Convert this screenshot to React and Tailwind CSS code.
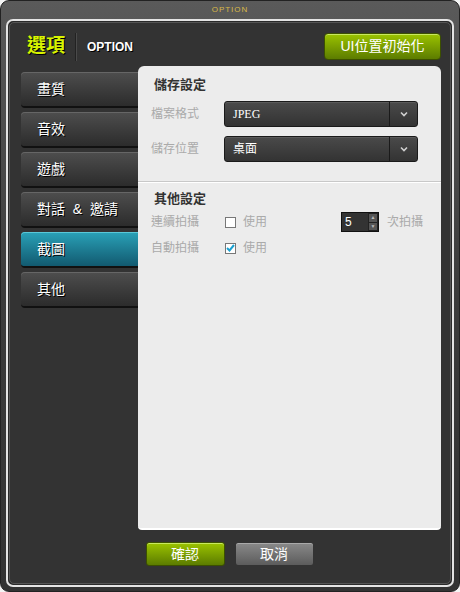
import React, { useState } from 'react';

const font = { fontFamily: '"Liberation Sans", "Noto Sans CJK TC", sans-serif' };

const navItems = ['畫質', '音效', '遊戲', '對話 & 邀請', '截圖', '其他'];

const Chevron = () => (
  <svg width="8" height="6" viewBox="0 0 8 6" className="text-[#d0d0d0]">
    <path d="M1 1.5 L4 4.5 L7 1.5" fill="none" stroke="currentColor" strokeWidth="1.6" />
  </svg>
);

const Select = ({ value }) => (
  <div className="flex h-[26px] w-[194px] rounded-[3px] border border-[#1a1a1a] bg-gradient-to-b from-[#4a4a4a] to-[#333] shadow-[inset_0_1px_0_#5a5a5a]">
    <div className="flex flex-1 items-center pl-[8px] text-[12px] text-white">{value}</div>
    <div className="flex w-[28px] items-center justify-center border-l border-[#1a1a1a]">
      <Chevron />
    </div>
  </div>
);

const Check = ({ checked }) => (
  <div className="flex h-[11px] w-[11px] items-center justify-center border border-[#777] bg-white">
    {checked && (
      <svg width="9" height="8" viewBox="0 0 9 8">
        <path d="M1 4 L3.5 6.5 L8 1" fill="none" stroke="#1aa0d0" strokeWidth="2" />
      </svg>
    )}
  </div>
);

export default function App() {
  const [active, setActive] = useState(4);

  return (
    <div style={font} className="h-[592px] w-[460px] bg-[#f4f4f4] p-0">
      <div className="flex h-full w-full flex-col rounded-[9px] border border-[#222] bg-gradient-to-b from-[#5a5a5a] via-[#3c3c3c] to-[#333]">
        <div className="flex h-[18px] items-center justify-center text-[8px] leading-none tracking-[1px] text-[#d8b848]">
          OPTION
        </div>
        <div className="mx-[5px] mb-[4px] flex flex-1 flex-col rounded-[7px] border-2 border-[#e4e4e4] bg-[#2a2a2a] p-[1px]">
          <div className="flex flex-1 flex-col rounded-[5px] border border-[#555] bg-[#333333]">
            <div className="flex h-[43px] items-center justify-between pl-[17px] pr-[9px] pt-[4px]">
              <div className="flex items-center">
                <span className="text-[19px] font-bold text-[#d8f400] [text-shadow:1px_1px_0_#000]">選項</span>
                <div className="ml-[10px] h-[28px] w-px bg-[#222] shadow-[1px_0_0_#4a4a4a]" />
                <span className="ml-[11px] text-[12px] font-bold text-white [text-shadow:1px_1px_0_#000]">OPTION</span>
              </div>
              <button className="flex h-[27px] w-[117px] items-center justify-center rounded-[4px] border border-[#3c5000] bg-gradient-to-b from-[#9cc400] to-[#5c7c00] text-[14px] text-white shadow-[inset_0_1px_0_#c8e860]">
                UI位置初始化
              </button>
            </div>
            <div className="flex pl-[11px] pr-[9px]">
              <div className="flex w-[117px] flex-col gap-[4px] pt-[6px]">
                {navItems.map((item, i) => (
                  <button
                    key={item}
                    onClick={() => setActive(i)}
                    className={`flex h-[36px] items-center whitespace-pre rounded-l-[4px] border-b-2 border-[#111] pl-[16px] text-left text-[14px] text-white [text-shadow:1px_1px_0_#000] ${
                      active === i
                        ? 'bg-gradient-to-b from-[#2aa2b8] to-[#125a70] shadow-[inset_0_1px_0_#5ac8d8]'
                        : 'bg-gradient-to-b from-[#4e4e4e] to-[#2c2c2c] shadow-[inset_0_1px_0_#666]'
                    }`}
                  >
                    {item.replace(' & ', '  &  ')}
                  </button>
                ))}
              </div>
              <div className="flex h-[464px] flex-1 flex-col rounded-t-[6px] rounded-b-[4px] border-b-2 border-white bg-[#ececec]">
                <div className="px-[13px] pt-[9px]">
                  <div className="pl-[3px] text-[13px] font-bold text-[#333]">儲存設定</div>
                  <div className="mt-[6px] flex items-center">
                    <span className="w-[73px] text-[12px] text-[#aaa]">檔案格式</span>
                    <Select value={<span style={{ fontFamily: '"Liberation Serif", serif' }}>JPEG</span>} />
                  </div>
                  <div className="mt-[9px] flex items-center">
                    <span className="w-[73px] text-[12px] text-[#aaa]">儲存位置</span>
                    <Select value="桌面" />
                  </div>
                </div>
                <div className="mt-[19px] h-px bg-[#c8c8c8] shadow-[0_1px_0_#fff]" />
                <div className="px-[13px] pt-[7px]">
                  <div className="pl-[3px] text-[13px] font-bold text-[#333]">其他設定</div>
                  <div className="mt-[3px] flex h-[22px] items-center">
                    <span className="w-[74px] text-[12px] text-[#aaa]">連續拍攝</span>
                    <Check />
                    <span className="ml-[7px] text-[12px] text-[#aaa]">使用</span>
                    <div className="ml-auto flex items-center">
                      <div className="flex h-[20px] border border-[#111] bg-[#333]">
                        <div className="flex w-[26px] items-center pl-[3px] text-[12px] text-white">5</div>
                        <div className="flex w-[10px] flex-col gap-px bg-[#222] p-px">
                          <div className="flex flex-1 items-center justify-center bg-[#555] text-[5px] leading-none text-[#bbb]">▲</div>
                          <div className="flex flex-1 items-center justify-center bg-[#555] text-[5px] leading-none text-[#bbb]">▼</div>
                        </div>
                      </div>
                      <span className="ml-[8px] mr-[5px] text-[12px] text-[#aaa]">次拍攝</span>
                    </div>
                  </div>
                  <div className="mt-[4px] flex h-[22px] items-center">
                    <span className="w-[74px] text-[12px] text-[#aaa]">自動拍攝</span>
                    <Check checked />
                    <span className="ml-[7px] text-[12px] text-[#aaa]">使用</span>
                  </div>
                </div>
              </div>
            </div>
            <div className="mt-[12px] flex justify-center gap-[10px] pr-[1px]">
              <button className="flex h-[24px] w-[79px] items-center justify-center rounded-[3px] border border-[#3c5000] bg-gradient-to-b from-[#9cc400] to-[#5c7c00] text-[14px] text-white shadow-[inset_0_1px_0_#c8e860]">
                確認
              </button>
              <button className="flex h-[24px] w-[79px] items-center justify-center rounded-[3px] border border-[#333] bg-gradient-to-b from-[#8a8a8a] to-[#5c5c5c] text-[14px] text-white shadow-[inset_0_1px_0_#aaa]">
                取消
              </button>
            </div>
          </div>
        </div>
      </div>
    </div>
  );
}
